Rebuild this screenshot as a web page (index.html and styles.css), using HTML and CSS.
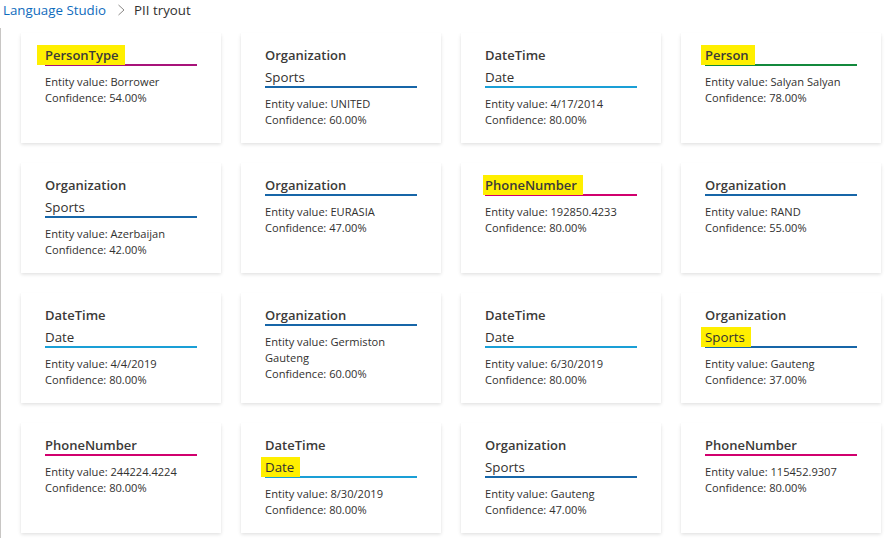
FILE: index.html
```html
<!DOCTYPE html>
<html lang="en">
<head>
<meta charset="utf-8">
<title>PII tryout</title>
<link rel="stylesheet" href="styles.css">
</head>
<body>
<nav class="crumbs">
  <a class="crumb-link" href="#">Language Studio</a>
  <svg class="chev" width="9" height="12" viewBox="0 0 9 12"><polyline points="1.5,1 7,6 1.5,11" fill="none" stroke="#8a8886" stroke-width="1"/></svg>
  <span class="crumb-current">PII tryout</span>
</nav>
<main class="panel">
  <div class="grid">
    <div class="card"><div class="title line persontype"><span class="hl hl-wide">PersonType</span></div><div class="info">Entity value: Borrower<br>Confidence: 54.00%</div></div>
    <div class="card"><div class="title">Organization</div><div class="sub line org">Sports</div><div class="info">Entity value: UNITED<br>Confidence: 60.00%</div></div>
    <div class="card"><div class="title">DateTime</div><div class="sub line date">Date</div><div class="info">Entity value: 4/17/2014<br>Confidence: 80.00%</div></div>
    <div class="card"><div class="title line person"><span class="hl">Person</span></div><div class="info">Entity value: Salyan Salyan<br>Confidence: 78.00%</div></div>

    <div class="card"><div class="title">Organization</div><div class="sub line org">Sports</div><div class="info">Entity value: Azerbaijan<br>Confidence: 42.00%</div></div>
    <div class="card"><div class="title line org">Organization</div><div class="info">Entity value: EURASIA<br>Confidence: 47.00%</div></div>
    <div class="card"><div class="title line phone"><span class="hl hl-tight">PhoneNumber</span></div><div class="info">Entity value: 192850.4233<br>Confidence: 80.00%</div></div>
    <div class="card"><div class="title line org">Organization</div><div class="info">Entity value: RAND<br>Confidence: 55.00%</div></div>

    <div class="card"><div class="title">DateTime</div><div class="sub line date">Date</div><div class="info">Entity value: 4/4/2019<br>Confidence: 80.00%</div></div>
    <div class="card"><div class="title line org">Organization</div><div class="info">Entity value: Germiston Gauteng<br>Confidence: 60.00%</div></div>
    <div class="card"><div class="title">DateTime</div><div class="sub line date">Date</div><div class="info">Entity value: 6/30/2019<br>Confidence: 80.00%</div></div>
    <div class="card"><div class="title">Organization</div><div class="sub line org"><span class="hl">Sports</span></div><div class="info">Entity value: Gauteng<br>Confidence: 37.00%</div></div>

    <div class="card"><div class="title line phone">PhoneNumber</div><div class="info">Entity value: 244224.4224<br>Confidence: 80.00%</div></div>
    <div class="card"><div class="title">DateTime</div><div class="sub line date"><span class="hl">Date</span></div><div class="info">Entity value: 8/30/2019<br>Confidence: 80.00%</div></div>
    <div class="card"><div class="title">Organization</div><div class="sub line org">Sports</div><div class="info">Entity value: Gauteng<br>Confidence: 47.00%</div></div>
    <div class="card"><div class="title line phone">PhoneNumber</div><div class="info">Entity value: 115452.9307<br>Confidence: 80.00%</div></div>
  </div>
</main>
</body>
</html>
```
FILE: styles.css
```css
html, body {
  margin: 0;
  padding: 0;
  background: #ffffff;
}
body {
  font-family: "Open Sans", "Noto Sans", sans-serif;
  color: #323130;
}
.crumbs {
  display: flex;
  align-items: center;
  height: 19px;
  padding-left: 3px;
  font-size: 13.3px;
}
.crumb-link {
  color: #0f6cbd;
  text-decoration: none;
}
.chev {
  margin: 0 8px 0 11px;
}
.crumb-current {
  color: #323130;
}
.panel {
  margin-top: 9px;
  border-left: 1px solid #c8c6c4;
  padding: 5px 0 6px 20px;
}
.grid {
  display: grid;
  grid-template-columns: repeat(4, 200px);
  grid-auto-rows: 110px;
  gap: 20px;
}
.card {
  background: #fff;
  box-shadow: 0 1.6px 3.6px rgba(0,0,0,0.13), 0 0.3px 0.9px rgba(0,0,0,0.11);
  padding: 13px 24px 0;
  box-sizing: border-box;
}
.title {
  font-size: 13px;
  font-weight: 600;
  line-height: 18px;
  color: #3b3a39;
}
.sub {
  margin-top: 4px;
  font-size: 13.3px;
  line-height: 18px;
  color: #323130;
}
.line { border-bottom: 2px solid; }
.persontype { border-color: #a8137a; }
.org { border-color: #1766a8; }
.date { border-color: #1a9fd6; }
.person { border-color: #13893c; }
.phone { border-color: #d1006e; }
.info {
  margin-top: 8px;
  font-size: 11.1px;
  line-height: 16px;
  color: #323130;
}
.hl {
  background: #ffef00;
  padding: 1px 6px 1px 4px;
  margin-left: -4px;
}
.hl-wide {
  padding-left: 8px;
  margin-left: -8px;
}
.hl-tight {
  padding-left: 2px;
  margin-left: -2px;
}
```
